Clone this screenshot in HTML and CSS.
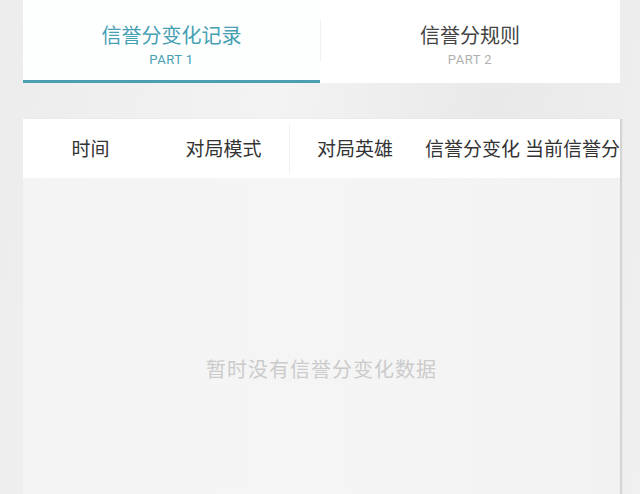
FILE: index.html
```html
<!DOCTYPE html>
<html lang="zh-CN">
<head>
    <meta charset="UTF-8">
    <meta name="viewport" content="width=device-width, initial-scale=1.0">
    <link rel="stylesheet" href="styles.css">
    <title>信誉分</title>
</head>
<body>
    <div class="page">
        <div class="tabs">
            <div class="tab active">
                <div class="tab-title">信誉分变化记录</div>
                <div class="tab-sub">PART 1</div>
            </div>
            <div class="tab">
                <div class="tab-title">信誉分规则</div>
                <div class="tab-sub">PART 2</div>
            </div>
        </div>

        <div class="table">
            <div class="table-head">
                <div class="col c1">时间</div>
                <div class="col c2">对局模式</div>
                <div class="col c3">对局英雄</div>
                <div class="col c4">信誉分变化</div>
                <div class="col c5">当前信誉分</div>
            </div>
            <div class="table-body">
                <div class="empty">暂时没有信誉分变化数据</div>
            </div>
        </div>
    </div>
</body>
</html>
```

FILE: styles.css
```css
* {
    box-sizing: border-box;
}

html, body {
    margin: 0;
    height: 100%;
}

body {
    font-family: "Noto Sans CJK SC", "Noto Sans", sans-serif;
    background: linear-gradient(100deg, #ececec 0%, #f3f3f3 40%, #e9e9e9 70%, #f0f0f0 100%);
    overflow: hidden;
}

.page {
    width: 597px;
    margin-left: 23px;
    height: 494px;
    display: flex;
    flex-direction: column;
}

.tabs {
    display: flex;
    height: 83px;
    background-color: #fff;
}

.tab {
    flex: 1;
    display: flex;
    flex-direction: column;
    align-items: center;
    padding-top: 21px;
    background-color: #fff;
    position: relative;
}

.tab.active {
    flex: 0 0 297px;
    border-bottom: 3px solid #4a9fb1;
    height: 83px;
    background-color: #fdfefe;
}

.tab + .tab::before {
    content: "";
    position: absolute;
    left: 0;
    top: 20px;
    height: 42px;
    width: 1px;
    background-color: #f0f0f0;
}

.tab-title {
    font-size: 20px;
    line-height: 28px;
    color: #444;
}

.tab-sub {
    font-family: "Roboto", "Liberation Sans", sans-serif;
    font-size: 13px;
    line-height: 18px;
    margin-top: 2px;
    color: #b0b0b0;
    letter-spacing: 0.5px;
}

.tab.active .tab-title,
.tab.active .tab-sub {
    color: #46a0b3;
}

.table {
    margin-top: 36px;
    flex: 1;
    display: flex;
    flex-direction: column;
    box-shadow: 2px 0 1px #d4d4d4;
}

.table-head {
    display: flex;
    height: 59px;
    background-color: #fff;
    overflow: hidden;
    white-space: nowrap;
}

.col {
    flex: none;
    display: flex;
    align-items: center;
    justify-content: center;
    font-size: 19px;
    color: #333;
    padding-bottom: 3px;
}

.c1 { width: 135px; }
.c2 { width: 132px; border-right: 1px solid #f2f2f2; margin: 4px 0; padding-bottom: 3px; }
.c3 { width: 130px; }
.c4 { width: 105px; }
.c5 { width: 100px; justify-content: flex-start; }

.table-body {
    flex: 1;
    background: linear-gradient(90deg, #f4f4f4 0%, #f5f5f5 50%, #f2f2f2 100%);
    display: flex;
    justify-content: center;
    padding-top: 176px;
}

.empty {
    font-size: 20px;
    line-height: 30px;
    height: 30px;
    color: #cbcbcb;
    letter-spacing: 1px;
}
```
